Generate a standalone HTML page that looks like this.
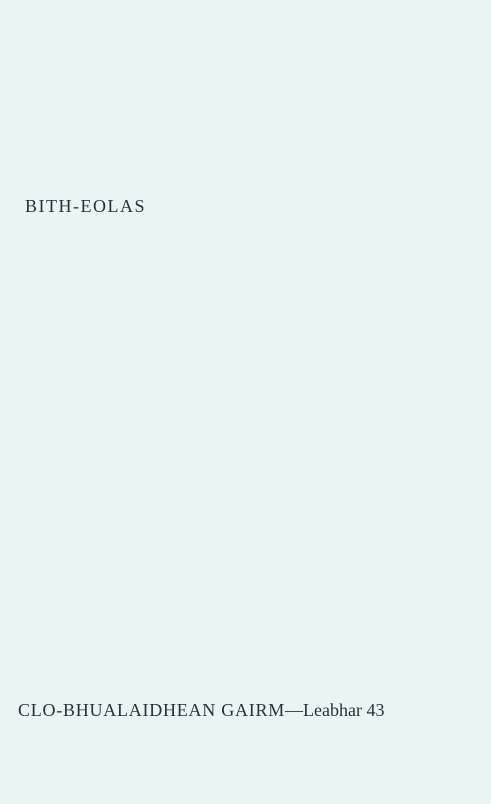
<!DOCTYPE html>
<html><head><style>
html,body{margin:0;padding:0}
body{width:491px;height:804px;background:#eaf4f5;position:relative;overflow:hidden;font-family:"Liberation Serif",serif;color:#2a2f38}
.t{position:absolute;white-space:nowrap}
</style></head><body>
<div class="t" style="left:25px;top:196px;font-size:18px;letter-spacing:1.5px">BITH-EOLAS</div>
<div class="t" style="left:18px;top:700px;font-size:18px;letter-spacing:0.75px">CLO-BHUALAIDHEAN GAIRM<span style="letter-spacing:0">—Leabhar 43</span></div>
</body></html>
